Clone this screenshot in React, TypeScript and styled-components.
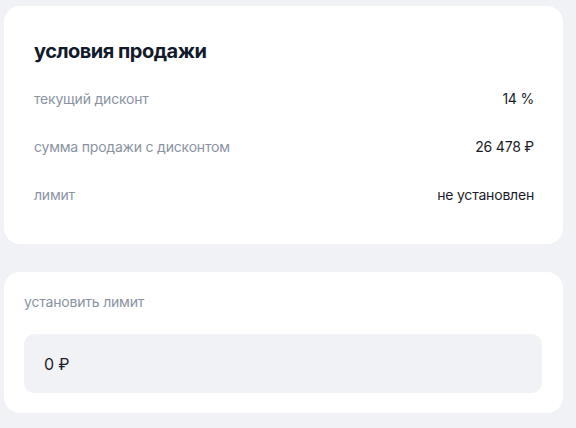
import styled, { createGlobalStyle } from "styled-components"

const GlobalStyle = createGlobalStyle`
	html, body {
		margin: 0;
		padding: 0;
		background-color: #f1f2f5;
		font-family: Inter, "Liberation Sans", sans-serif;
	}
`

const Page = styled.div`
	display: flex;
	flex-direction: column;
	gap: 28px;
	width: 559px;
	padding: 6px 0 0 4px;
`

const Card = styled.div<{ $pad: string }>`
	background-color: #ffffff;
	border-radius: 16px;
	padding: ${(p) => p.$pad};
`

const Title = styled.div`
	font-size: 20px;
	line-height: 28px;
	font-weight: 700;
	letter-spacing: -0.5px;
	color: #121a2b;
	margin: 1px 0 9px;
`

const Row = styled.div`
	display: flex;
	justify-content: space-between;
	align-items: center;
	height: 48px;
	font-size: 14px;
	letter-spacing: -0.2px;
`

const Label = styled.div`
	color: #8a93a2;
`

const Value = styled.div`
	color: #1b1d2a;
`

const FieldLabel = styled.div`
	font-size: 14px;
	line-height: 20px;
	letter-spacing: -0.2px;
	color: #8a93a2;
	margin-bottom: 22px;
`

const Input = styled.div`
	height: 59px;
	display: flex;
	align-items: center;
	padding: 0 20px;
	background-color: #f1f2f5;
	border-radius: 10px;
	font-size: 16px;
	letter-spacing: -0.2px;
	color: #1b1d2a;
`

const rows = [
	{ label: "текущий дисконт", value: "14 %" },
	{ label: "сумма продажи с дисконтом", value: "26 478 ₽" },
	{ label: "лимит", value: "не установлен" },
]

export default function App() {
	return (
		<>
			<GlobalStyle />
			<Page>
				<Card $pad="30px 29px 26px 30px">
					<Title>условия продажи</Title>
					{rows.map((r) => (
						<Row key={r.label}>
							<Label>{r.label}</Label>
							<Value>{r.value}</Value>
						</Row>
					))}
				</Card>
				<Card $pad="20px 21px 20px 20px">
					<FieldLabel>установить лимит</FieldLabel>
					<Input>0 ₽</Input>
				</Card>
			</Page>
		</>
	)
}
